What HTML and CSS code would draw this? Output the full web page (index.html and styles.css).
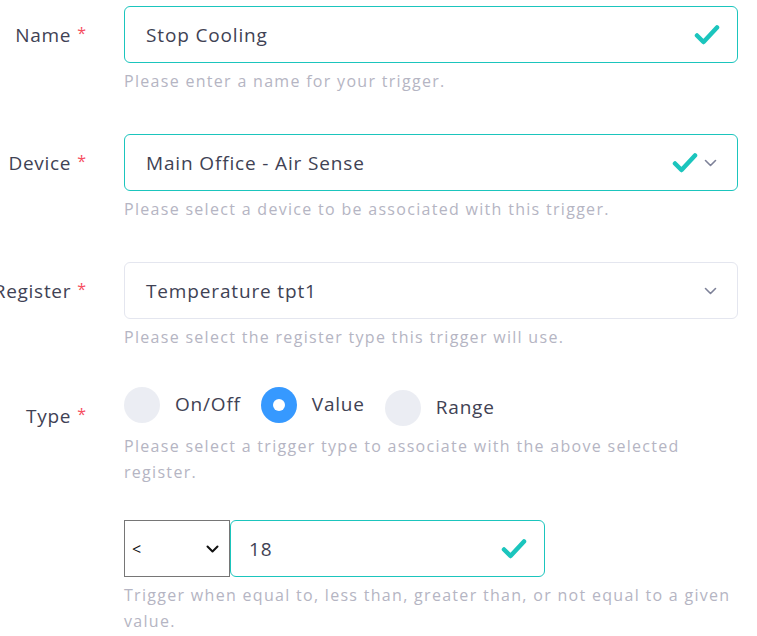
FILE: index.html
```html
<!DOCTYPE html>
<html>
<head>
<meta charset="utf-8">
<link rel="stylesheet" href="styles.css">
</head>
<body>
<form class="form">
  <div class="row">
    <div class="label"><span>Name</span><span class="req">*</span></div>
    <div class="control">
      <div class="field valid">
        <span class="value">Stop Cooling</span>
        <svg class="check" width="26" height="22" viewBox="0 0 26 22"><polyline points="3,11.5 9.5,18 23,3.5" fill="none" stroke="#1bc5bd" stroke-width="4.5" stroke-linecap="round" stroke-linejoin="round"/></svg>
      </div>
      <div class="help">Please enter a name for your trigger.</div>
    </div>
  </div>

  <div class="row">
    <div class="label"><span>Device</span><span class="req">*</span></div>
    <div class="control">
      <div class="field valid">
        <span class="value">Main Office - Air Sense</span>
        <svg class="check" width="26" height="22" viewBox="0 0 26 22"><polyline points="3,11.5 9.5,18 23,3.5" fill="none" stroke="#1bc5bd" stroke-width="4.5" stroke-linecap="round" stroke-linejoin="round"/></svg>
        <svg class="chev" width="13" height="8" viewBox="0 0 13 8"><polyline points="1.5,1.5 6.5,6.5 11.5,1.5" fill="none" stroke="#7e8299" stroke-width="1.6" stroke-linecap="round" stroke-linejoin="round"/></svg>
      </div>
      <div class="help">Please select a device to be associated with this trigger.</div>
    </div>
  </div>

  <div class="row">
    <div class="label"><span>Register</span><span class="req">*</span></div>
    <div class="control">
      <div class="field">
        <span class="value">Temperature tpt1</span>
        <svg class="chev" width="13" height="8" viewBox="0 0 13 8"><polyline points="1.5,1.5 6.5,6.5 11.5,1.5" fill="none" stroke="#7e8299" stroke-width="1.6" stroke-linecap="round" stroke-linejoin="round"/></svg>
      </div>
      <div class="help">Please select the register type this trigger will use.</div>
    </div>
  </div>

  <div class="row type-row">
    <div class="label label-type"><span>Type</span><span class="req">*</span></div>
    <div class="control">
      <div class="radios">
        <label class="radio"><span class="dot"></span><span class="rtext">On/Off</span></label>
        <label class="radio"><span class="dot on"></span><span class="rtext">Value</span></label>
        <label class="radio radio-low"><span class="dot"></span><span class="rtext">Range</span></label>
      </div>
      <div class="help help-type">Please select a trigger type to associate with the above selected register.</div>
    </div>
  </div>

  <div class="row last">
    <div class="label"></div>
    <div class="control">
      <div class="pair">
        <div class="op">
          <span class="optext">&lt;</span>
          <svg width="13" height="8" viewBox="0 0 13 8"><polyline points="1.5,1.5 6.5,6.5 11.5,1.5" fill="none" stroke="#111" stroke-width="2" stroke-linecap="round" stroke-linejoin="round"/></svg>
        </div>
        <div class="field valid num">
          <span class="value">18</span>
          <svg class="check" width="26" height="22" viewBox="0 0 26 22"><polyline points="3,11.5 9.5,18 23,3.5" fill="none" stroke="#1bc5bd" stroke-width="4.5" stroke-linecap="round" stroke-linejoin="round"/></svg>
        </div>
      </div>
      <div class="help help-op">Trigger when equal to, less than, greater than, or not equal to a given value.</div>
    </div>
  </div>
</form>
</body>
</html>
```

FILE: styles.css
```css
* { box-sizing: border-box; }
html, body { margin: 0; padding: 0; background: #ffffff; }
body {
  font-family: "Open Sans", "Noto Sans", sans-serif;
  color: #3f4254;
  overflow: hidden;
  width: 757px;
  height: 636px;
}
.form {
  padding-top: 6px;
  padding-right: 19px;
}
.row {
  display: grid;
  grid-template-columns: 88px 1fr;
  column-gap: 36px;
  margin-bottom: 40px;
}
.row.type-row { margin-top: -3px; margin-bottom: 35px; }
.row.last { margin-bottom: 0; }
.label {
  display: flex;
  justify-content: flex-end;
  align-items: center;
  font-size: 19px;
  letter-spacing: 0.7px;
  height: 57px;
  white-space: nowrap;
  padding-right: 2px;
}
.label .req { color: #f64e60; font-size: 16px; margin-left: 6px; letter-spacing: 0; position: relative; top: -2px; }
.label-type { height: 36px; margin-top: 11px; }
.control { min-width: 0; }
.field {
  height: 57px;
  border: 1px solid #e4e6ef;
  border-radius: 6px;
  display: flex;
  align-items: center;
  padding: 0 20px 0 21px;
  font-size: 19px;
  letter-spacing: 0.85px;
}
.field.valid { border-color: #1bc5bd; }
.field .value { flex: 1; }
.check { display: block; margin-right: -3px; }
.field .chev { margin-left: 8px; }
.field.valid .chev { margin-left: 9px; }
.help {
  color: #b5b5c3;
  font-size: 16px;
  letter-spacing: 1.3px;
  line-height: 26px;
  margin-top: 5px;
}
.radios {
  display: flex;
  align-items: center;
  height: 36px;
}
.radio {
  display: flex;
  align-items: center;
  margin-right: 20px;
}
.radio-low { margin-top: 6px; }
.dot {
  width: 36px;
  height: 36px;
  border-radius: 50%;
  background: #ebedf3;
  display: flex;
  align-items: center;
  justify-content: center;
  flex: none;
}
.dot.on { background: #3699ff; }
.dot.on::after {
  content: "";
  width: 12px;
  height: 12px;
  border-radius: 50%;
  background: #ffffff;
}
.rtext { margin-left: 15px; font-size: 19px; letter-spacing: 0.8px; line-height: 26px; margin-top: -2px; }
.help-type { margin-top: 10px; }
.pair {
  display: flex;
  width: 421px;
  height: 57px;
}
.op {
  width: 106px;
  height: 57px;
  border: 1px solid #767676;
  display: flex;
  align-items: center;
  justify-content: space-between;
  padding: 0 10px 0 7px;
  font-size: 16px;
  color: #111;
  background: #fff;
}
.field.num { flex: 1; height: 57px; padding-left: 18px; }
.help-op { margin-top: 5px; }
```
